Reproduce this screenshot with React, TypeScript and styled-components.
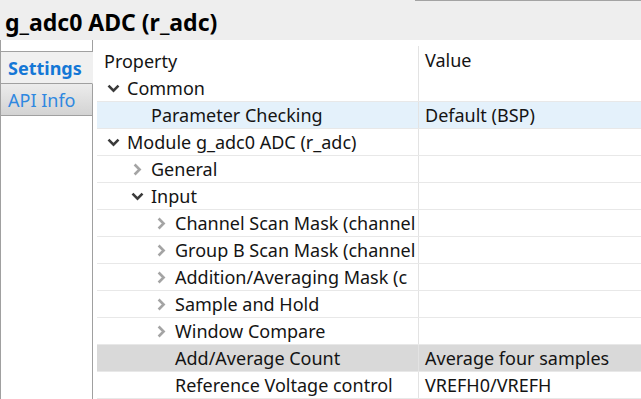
import React from "react";
import styled, { createGlobalStyle } from "styled-components";

const GlobalStyle = createGlobalStyle`
  html, body { margin: 0; padding: 0; background: #ffffff; }
  body { font-family: "Noto Sans", "Open Sans", sans-serif; color: #141414; overflow: hidden; }
  * { box-sizing: border-box; }
`;

const Page = styled.div`
  width: 641px;
  height: 399px;
  display: flex;
  flex-direction: column;
  overflow: hidden;
`;

const TitleBar = styled.div`
  height: 40px;
  background: #eeeeee;
  display: flex;
  flex-direction: column;
`;

const TopEdge = styled.div`
  height: 1px;
  margin-left: 415px;
  background: #a3a3a3;
`;

const Title = styled.h1`
  margin: 0;
  padding: 5px 0 0 5px;
  font-size: 23px;
  font-weight: 700;
  line-height: 32px;
  color: #000;
  white-space: nowrap;
`;

const Body = styled.div`
  flex: 1;
  display: flex;
  min-height: 0;
`;

const Sidebar = styled.div`
  width: 93px;
  display: flex;
  flex-direction: column;
  border-left: 1px solid #a0a0a0;
`;

const SidebarTop = styled.div`
  height: 12px;
  border-right: 1px solid #a0a0a0;
  border-bottom: 1px solid #a0a0a0;
`;

const Tab = styled.div<{ $active?: boolean }>`
  height: 32px;
  display: flex;
  align-items: center;
  padding-left: 7px;
  font-size: 18px;
  font-weight: ${(p) => (p.$active ? 700 : 400)};
  color: ${(p) => (p.$active ? "#1477d6" : "#2f88e0")};
  background: ${(p) =>
    p.$active ? "#f0f0f0" : "linear-gradient(#ececec, #d3d3d3)"};
  border-right: 1px solid ${(p) => (p.$active ? "transparent" : "#a0a0a0")};
  border-bottom: 1px solid #a0a0a0;
  white-space: nowrap;
`;

const SidebarFill = styled.div`
  flex: 1;
  border-right: 1px solid #a0a0a0;
`;

const Tree = styled.div`
  flex: 1;
  margin-left: 4px;
  padding-top: 5px;
  display: flex;
  flex-direction: column;
  min-width: 0;
`;

const HeaderRow = styled.div`
  height: 30px;
  display: grid;
  grid-template-columns: 322px 1fr;
  font-size: 18px;
`;

const HeaderCell = styled.div<{ $first?: boolean }>`
  display: flex;
  align-items: center;
  padding-left: ${(p) => (p.$first ? 7 : 6)}px;
  border-right: ${(p) => (p.$first ? "1px solid #e3e3e3" : "none")};
  margin-top: ${(p) => (p.$first ? 1 : 0)}px;
`;

const Row = styled.div<{ $tone?: "blue" | "gray" }>`
  height: 27px;
  display: grid;
  grid-template-columns: 322px 1fr;
  border-bottom: 1px solid #e8e8e8;
  font-size: 18px;
  background: ${(p) =>
    p.$tone === "blue" ? "#e4f1fb" : p.$tone === "gray" ? "#d9d9d9" : "transparent"};
`;

const PropCell = styled.div<{ $level: number }>`
  display: flex;
  align-items: center;
  padding-left: ${(p) => 6 + p.$level * 24}px;
  border-right: 1px solid #e3e3e3;
  overflow: hidden;
  white-space: nowrap;
`;

const ValueCell = styled.div`
  display: flex;
  align-items: center;
  padding-left: 6px;
  overflow: hidden;
  white-space: nowrap;
`;

const Toggle = styled.span`
  width: 20px;
  flex: 0 0 20px;
  margin-right: 4px;
  display: flex;
  align-items: center;
  justify-content: center;
`;

type Node = {
  label: string;
  level: number;
  state?: "open" | "closed";
  value?: string;
  tone?: "blue" | "gray";
};

const rows: Node[] = [
  { label: "Common", level: 0, state: "open" },
  { label: "Parameter Checking", level: 1, value: "Default (BSP)", tone: "blue" },
  { label: "Module g_adc0 ADC (r_adc)", level: 0, state: "open" },
  { label: "General", level: 1, state: "closed" },
  { label: "Input", level: 1, state: "open" },
  { label: "Channel Scan Mask (channel", level: 2, state: "closed" },
  { label: "Group B Scan Mask (channel", level: 2, state: "closed" },
  { label: "Addition/Averaging Mask (c", level: 2, state: "closed" },
  { label: "Sample and Hold", level: 2, state: "closed" },
  { label: "Window Compare", level: 2, state: "closed" },
  { label: "Add/Average Count", level: 2, value: "Average four samples", tone: "gray" },
  { label: "Reference Voltage control", level: 2, value: "VREFH0/VREFH" },
];

const Chevron = ({ state }: { state?: "open" | "closed" }) => {
  if (state === "open")
    return (
      <svg width="13" height="9" viewBox="0 0 13 9">
        <path d="M1.5 1.6 L6.5 6.6 L11.5 1.6" fill="none" stroke="#3a3a3a" strokeWidth="2.6" />
      </svg>
    );
  if (state === "closed")
    return (
      <svg width="9" height="13" viewBox="0 0 9 13">
        <path d="M1.6 1.5 L6.6 6.5 L1.6 11.5" fill="none" stroke="#a4a4a4" strokeWidth="2.6" />
      </svg>
    );
  return null;
};

export default function App() {
  return (
    <Page>
      <GlobalStyle />
      <TitleBar>
        <TopEdge />
        <Title>g_adc0 ADC (r_adc)</Title>
      </TitleBar>
      <Body>
        <Sidebar>
          <SidebarTop />
          <Tab $active>Settings</Tab>
          <Tab>API Info</Tab>
          <SidebarFill />
        </Sidebar>
        <Tree>
          <HeaderRow>
            <HeaderCell $first>Property</HeaderCell>
            <HeaderCell>Value</HeaderCell>
          </HeaderRow>
          {rows.map((r) => (
            <Row key={r.label} $tone={r.tone}>
              <PropCell $level={r.level}>
                <Toggle>
                  <Chevron state={r.state} />
                </Toggle>
                {r.label}
              </PropCell>
              <ValueCell>{r.value ?? ""}</ValueCell>
            </Row>
          ))}
        </Tree>
      </Body>
    </Page>
  );
}
